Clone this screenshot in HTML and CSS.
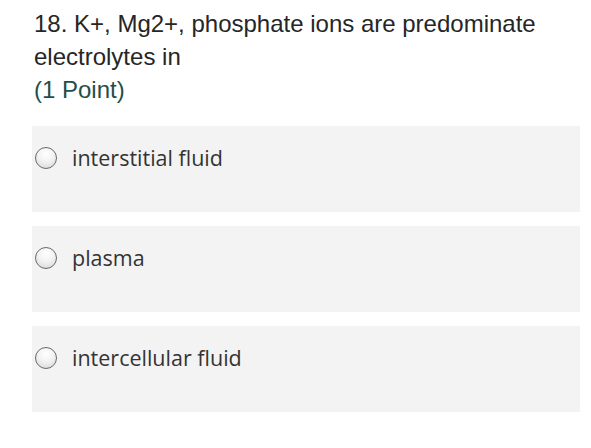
FILE: index.html
```html
<!DOCTYPE html>
<html>
<head>
<meta charset="utf-8">
<link rel="stylesheet" href="styles.css">
</head>
<body>
<div class="question">
  <div class="title">18. K+, Mg2+, phosphate ions are predominate electrolytes in</div>
  <div class="points">(1 Point)</div>
</div>
<div class="options">
  <label class="option"><span class="radio"></span><span class="label">interstitial fluid</span></label>
  <label class="option"><span class="radio"></span><span class="label">plasma</span></label>
  <label class="option"><span class="radio"></span><span class="label">intercellular fluid</span></label>
</div>
</body>
</html>
```
FILE: styles.css
```css
html, body {
  margin: 0;
  padding: 0;
  background: #ffffff;
}
body {
  width: 591px;
  height: 448px;
  overflow: hidden;
  padding: 7px 11px 0 34px;
  box-sizing: border-box;
}
.question {
  font-family: "Liberation Sans", Arial, sans-serif;
  font-size: 24px;
  line-height: 33px;
  color: #262626;
}
.title {
  width: 530px;
}
.points {
  color: #1f4f4a;
}
.options {
  margin-top: 20px;
  margin-left: -2px;
  display: flex;
  flex-direction: column;
  gap: 14px;
}
.option {
  display: flex;
  align-items: flex-start;
  background: #f3f3f3;
  height: 86px;
  box-sizing: border-box;
  padding: 20px 0 0 3px;
}
.radio {
  width: 22px;
  height: 22px;
  box-sizing: border-box;
  border-radius: 50%;
  border: 1.5px solid #6a6a6a;
  background: radial-gradient(circle at 50% 30%, #ffffff 0%, #f2f2f2 45%, #d4d4d4 100%);
  flex: none;
  margin-top: 1px;
}
.label {
  margin-left: 15px;
  font-family: "Open Sans", "Noto Sans", sans-serif;
  font-size: 21.5px;
  line-height: 24px;
  color: #333333;
}
```
